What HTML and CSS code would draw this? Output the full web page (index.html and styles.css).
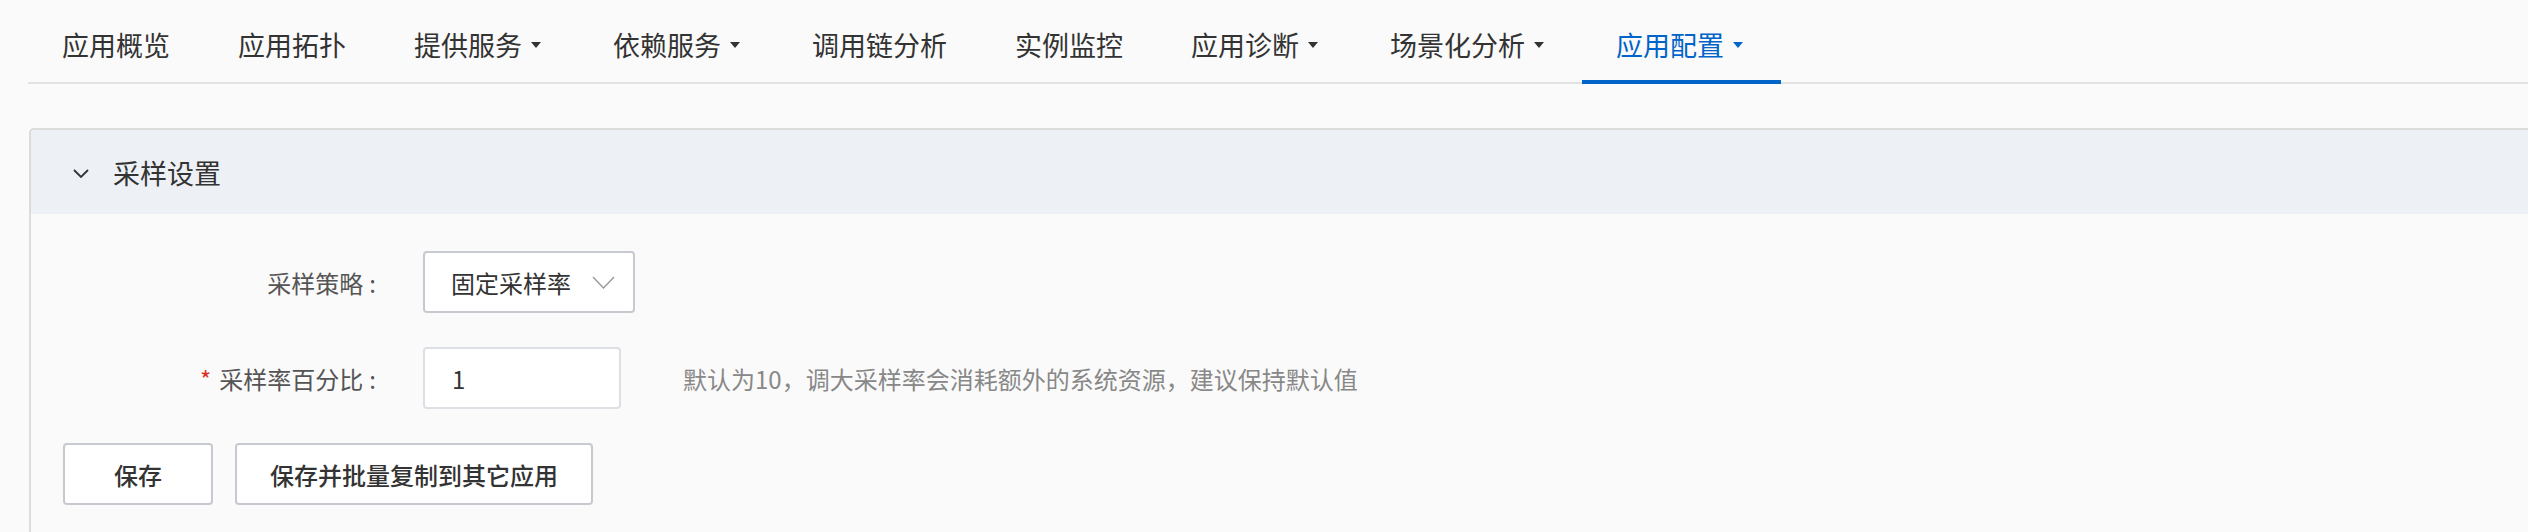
FILE: index.html
```html
<!DOCTYPE html>
<html lang="zh-CN">
<head>
    <meta charset="UTF-8">
    <meta name="viewport" content="width=device-width, initial-scale=1.0">
    <title>应用配置</title>
    <link rel="stylesheet" href="styles.css">
</head>
<body>

    <nav class="tabs">
        <a class="tab">应用概览</a>
        <a class="tab">应用拓扑</a>
        <a class="tab">提供服务<span class="caret"></span></a>
        <a class="tab">依赖服务<span class="caret"></span></a>
        <a class="tab">调用链分析</a>
        <a class="tab">实例监控</a>
        <a class="tab">应用诊断<span class="caret"></span></a>
        <a class="tab">场景化分析<span class="caret"></span></a>
        <a class="tab active">应用配置<span class="caret"></span></a>
    </nav>

    <section class="panel">
        <div class="panel_head">
            <svg class="panel_arrow" width="16" height="9" viewBox="0 0 16 9">
                <path d="M1 1 L8 8 L15 1" fill="none" stroke="#333" stroke-width="1.8"/>
            </svg>
            <span>采样设置</span>
        </div>

        <div class="panel_body">
            <div class="form_row">
                <label class="form_label">采样策略<span class="colon">:</span></label>
                <div class="select_box">
                    <span>固定采样率</span>
                    <svg width="23" height="13" viewBox="0 0 23 13">
                        <path d="M1 1 L11.5 12 L22 1" fill="none" stroke="#999" stroke-width="1.4"/>
                    </svg>
                </div>
            </div>

            <div class="form_row">
                <label class="form_label"><span class="required">*</span>采样率百分比<span class="colon">:</span></label>
                <input class="text_input" type="text" value="1">
                <span class="hint">默认为10，调大采样率会消耗额外的系统资源，建议保持默认值</span>
            </div>

            <div class="actions">
                <button class="btn save_button">保存</button>
                <button class="btn">保存并批量复制到其它应用</button>
            </div>
        </div>
    </section>

</body>
</html>
```

FILE: styles.css
```css
body {
    font-family: "Noto Sans CJK SC", "Noto Sans", sans-serif;
    background-color: #fafafa;
    color: #333;
    margin: 0;
    padding: 0 0 0 28px;
}

/* top tabs */
.tabs {
    display: flex;
    border-bottom: 2px solid #e2e2e2;
    height: 82px;
}

.tab {
    position: relative;
    display: flex;
    align-items: center;
    padding: 6px 34px 0;
    font-size: 27px;
    color: #333;
    cursor: pointer;
}

.tab .caret {
    width: 0;
    height: 0;
    margin-left: 9px;
    margin-right: 4px;
    margin-top: 2px;
    border-left: 5px solid transparent;
    border-right: 5px solid transparent;
    border-top: 6px solid #333;
}

.tab.active {
    color: #0064c8;
}

.tab.active .caret {
    border-top-color: #0064c8;
}

.tab.active::after {
    content: "";
    position: absolute;
    left: 0;
    right: 0;
    bottom: -2px;
    height: 4px;
    background-color: #0064c8;
}

/* panel */
.panel {
    margin-top: 44px;
    margin-left: 1px;
    border-top: 2px solid #dcdcdc;
    border-left: 2px solid #dcdcdc;
    border-top-left-radius: 5px;
    overflow: hidden;
}

.panel_head {
    display: flex;
    align-items: center;
    height: 84px;
    padding-left: 42px;
    background-color: #edf0f4;
    font-size: 27px;
    color: #333;
}

.panel_arrow {
    margin-right: 24px;
    margin-top: 2px;
}

.panel_body {
    padding: 37px 0 40px 32px;
}

.form_row {
    display: flex;
    align-items: center;
    margin-bottom: 34px;
}

.form_label {
    width: 313px;
    margin-right: 47px;
    text-align: right;
    font-size: 24px;
    color: #555;
}

.colon {
    margin-left: 6px;
}

.required {
    color: #d93026;
    margin-right: 8px;
}

.select_box {
    display: flex;
    align-items: center;
    justify-content: space-between;
    box-sizing: border-box;
    width: 212px;
    height: 62px;
    padding: 0 18px 0 26px;
    border: 2px solid #c6c9cf;
    border-radius: 4px;
    background-color: #fff;
    font-size: 24px;
    color: #333;
}

.text_input {
    box-sizing: border-box;
    width: 198px;
    height: 62px;
    padding: 0 0 0 27px;
    border: 2px solid #dcdfe4;
    border-radius: 4px;
    background-color: #fff;
    font-family: inherit;
    font-size: 24px;
    color: #333;
    outline: none;
}

.hint {
    margin-left: 62px;
    font-size: 24px;
    color: #888;
}

.actions {
    display: flex;
    gap: 22px;
}

.btn {
    box-sizing: border-box;
    height: 62px;
    padding: 0 33px;
    border: 2px solid #c6c9cf;
    border-radius: 4px;
    background-color: #fff;
    font-family: inherit;
    font-size: 24px;
    font-weight: 500;
    color: #333;
    cursor: pointer;
}

.save_button {
    width: 150px;
}
```
